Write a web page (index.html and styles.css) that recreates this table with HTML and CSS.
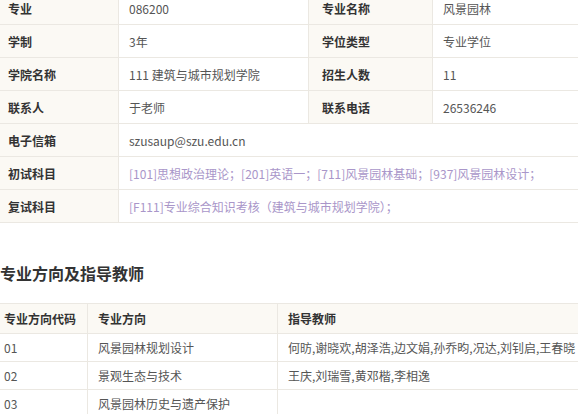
FILE: index.html
```html
<!DOCTYPE html>
<html lang="zh-CN">
<head>
    <meta charset="UTF-8">
    <meta name="viewport" content="width=device-width, initial-scale=1.0">
    <title>风景园林 - 专业信息</title>
    <link rel="stylesheet" href="styles.css">
</head>
<body>
    <div class="page">
        <table class="info-table">
            <tr>
                <th class="label">专业</th>
                <td class="value col-b">086200</td>
                <th class="label col-c">专业名称</th>
                <td class="value">风景园林</td>
            </tr>
            <tr>
                <th class="label">学制</th>
                <td class="value col-b">3年</td>
                <th class="label col-c">学位类型</th>
                <td class="value">专业学位</td>
            </tr>
            <tr>
                <th class="label">学院名称</th>
                <td class="value col-b">111 建筑与城市规划学院</td>
                <th class="label col-c">招生人数</th>
                <td class="value">11</td>
            </tr>
            <tr>
                <th class="label">联系人</th>
                <td class="value col-b">于老师</td>
                <th class="label col-c">联系电话</th>
                <td class="value">26536246</td>
            </tr>
            <tr>
                <th class="label">电子信箱</th>
                <td class="value" colspan="3">szusaup@szu.edu.cn</td>
            </tr>
            <tr>
                <th class="label">初试科目</th>
                <td class="value subject" colspan="3">[101]思想政治理论；[201]英语一；[711]风景园林基础；[937]风景园林设计；</td>
            </tr>
            <tr>
                <th class="label">复试科目</th>
                <td class="value subject" colspan="3">[F111]专业综合知识考核（建筑与城市规划学院）；</td>
            </tr>
        </table>

        <h2 class="section-title">专业方向及指导教师</h2>

        <table class="dir-table">
            <tr>
                <th class="d-code">专业方向代码</th>
                <th class="d-name">专业方向</th>
                <th>指导教师</th>
            </tr>
            <tr>
                <td>01</td>
                <td>风景园林规划设计</td>
                <td>何昉,谢晓欢,胡泽浩,边文娟,孙乔昀,况达,刘钊启,王春晓</td>
            </tr>
            <tr>
                <td>02</td>
                <td>景观生态与技术</td>
                <td>王庆,刘瑞雪,黄邓楷,李相逸</td>
            </tr>
            <tr>
                <td>03</td>
                <td>风景园林历史与遗产保护</td>
                <td></td>
            </tr>
        </table>
    </div>
</body>
</html>
```

FILE: styles.css
```css
html {
    overflow: hidden;
}

body {
    margin: 0;
    font-family: "Noto Sans CJK SC", "Microsoft YaHei", sans-serif;
    font-size: 12px;
    color: #555;
    background-color: #fff;
}

.page {
    width: 600px;
    margin: -9px 0 0 -3px;
}

table {
    border-collapse: collapse;
    width: 100%;
}

/* 基本信息 */
.info-table th,
.info-table td {
    height: 32px;
    padding: 0 10px;
    border: 1px solid #ebe8e2;
    text-align: left;
    white-space: nowrap;
}

.info-table .label {
    width: 100px;
    background-color: #fbf9f4;
    color: #333;
    font-weight: bold;
}

.info-table .col-b {
    width: 169px;
}

.info-table .col-c {
    width: 100px;
    padding-left: 13px;
}

.info-table .subject {
    color: #a996c9;
}

/* 专业方向 */
.section-title {
    margin: 38px 0 0 3px;
    height: 42px;
    font-size: 16px;
    font-weight: 600;
    color: #333;
    line-height: 24px;
}

.dir-table {
    margin-left: -4px;
}

.dir-table th,
.dir-table td {
    height: 27px;
    padding: 0 10px;
    border: 1px solid #ebe8e2;
    text-align: left;
    white-space: nowrap;
}

.dir-table th {
    height: 29px;
    background-color: #fbf9f4;
    color: #333;
    font-weight: bold;
}

.dir-table .d-code {
    width: 73px;
}

.dir-table .d-name {
    width: 169px;
}
```
